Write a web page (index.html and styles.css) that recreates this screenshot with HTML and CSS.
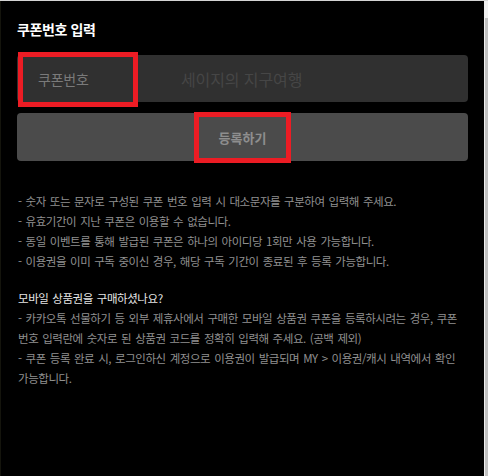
FILE: index.html
```html
<!DOCTYPE html>
<html lang="ko">
<head>
  <meta charset="UTF-8">
  <meta name="viewport" content="width=device-width, initial-scale=1.0">
  <title>쿠폰번호 입력</title>
  <link rel="stylesheet" href="styles.css">
</head>
<body>
  <div class="panel">
    <h3 class="title">쿠폰번호 입력</h3>

    <!-- Coupon input -->
    <div class="coupon-input">
      <span class="placeholder">쿠폰번호</span>
      <span class="watermark">세이지의 지구여행</span>
      <div class="mark mark-input"></div>
    </div>

    <button class="register-btn">
      등록하기
      <span class="mark mark-btn"></span>
    </button>

    <ul class="notice">
      <li>- 숫자 또는 문자로 구성된 쿠폰 번호 입력 시 대소문자를 구분하여 입력해 주세요.</li>
      <li>- 유효기간이 지난 쿠폰은 이용할 수 없습니다.</li>
      <li>- 동일 이벤트를 통해 발급된 쿠폰은 하나의 아이디당 1회만 사용 가능합니다.</li>
      <li>- 이용권을 이미 구독 중이신 경우, 해당 구독 기간이 종료된 후 등록 가능합니다.</li>
    </ul>

    <div class="mobile">
      <p class="mobile-title">모바일 상품권을 구매하셨나요?</p>
      <p>- 카카오톡 선물하기 등 외부 제휴사에서 구매한 모바일 상품권 쿠폰을 등록하시려는 경우, 쿠폰 번호 입력란에 숫자로 된 상품권 코드를 정확히 입력해 주세요. (공백 제외)</p>
      <p>- 쿠폰 등록 완료 시, 로그인하신 계정으로 이용권이 발급되며 MY &gt; 이용권/캐시 내역에서 확인 가능합니다.</p>
    </div>
  </div>

  <div class="scrollbar">
    <div class="thumb"></div>
  </div>
</body>
</html>
```

FILE: styles.css
```css
body {
  display: flex;
  margin: 0;
  height: 100vh;
  overflow: hidden;
  border-top: 1px solid #d4d4d4;
  box-sizing: border-box;
  background-color: #000;
  font-family: "Noto Sans CJK KR", "Noto Sans", sans-serif;
}

.panel {
  flex: 1;
  padding: 19px 16px 0 17px;
  background-color: #000;
  border-left: 1px solid #14140c;
}

.title {
  margin: 0 0 17px -1px;
  font-size: 14px;
  line-height: 18px;
  font-weight: bold;
  letter-spacing: -0.4px;
  color: #fff;
}

.coupon-input {
  position: relative;
  display: flex;
  align-items: center;
  height: 47px;
  margin-left: -1px;
  padding-left: 21px;
  background-color: #303030;
  border-radius: 4px;
}

.placeholder {
  width: 143px;
  font-size: 14px;
  letter-spacing: -0.2px;
  color: #7a7a7a;
}

.watermark {
  font-size: 16px;
  letter-spacing: -0.1px;
  color: #464646;
}

.register-btn {
  position: relative;
  display: block;
  width: calc(100% + 1px);
  height: 48px;
  margin: 11px 0 0 -1px;
  border: none;
  border-radius: 4px;
  background-color: #4b4b4b;
  font-family: inherit;
  font-size: 13px;
  font-weight: bold;
  color: #8e8e8e;
}

.mark {
  position: absolute;
  border: 5px solid #ec1c24;
  box-sizing: border-box;
}

.mark-input {
  left: 1px;
  top: -3px;
  width: 120px;
  height: 55px;
}

.mark-btn {
  left: 177px;
  top: -1px;
  width: 97px;
  height: 51px;
}

.notice,
.mobile {
  margin: 0;
  padding: 0;
  list-style: none;
  font-size: 11.5px;
  line-height: 20px;
  letter-spacing: -0.45px;
  word-spacing: 1.2px;
  word-break: keep-all;
  color: #909090;
}

.notice {
  margin-top: 30px;
}

.mobile {
  margin-top: 17px;
}

.mobile p {
  margin: 0;
}

.mobile .mobile-title {
  color: #e4e4e4;
}

.scrollbar {
  position: relative;
  width: 4px;
  background-color: #f0f0f0;
}

.thumb {
  position: absolute;
  top: 17px;
  bottom: 0;
  right: 0;
  width: 3px;
  background-color: #c2c2c2;
}
```
